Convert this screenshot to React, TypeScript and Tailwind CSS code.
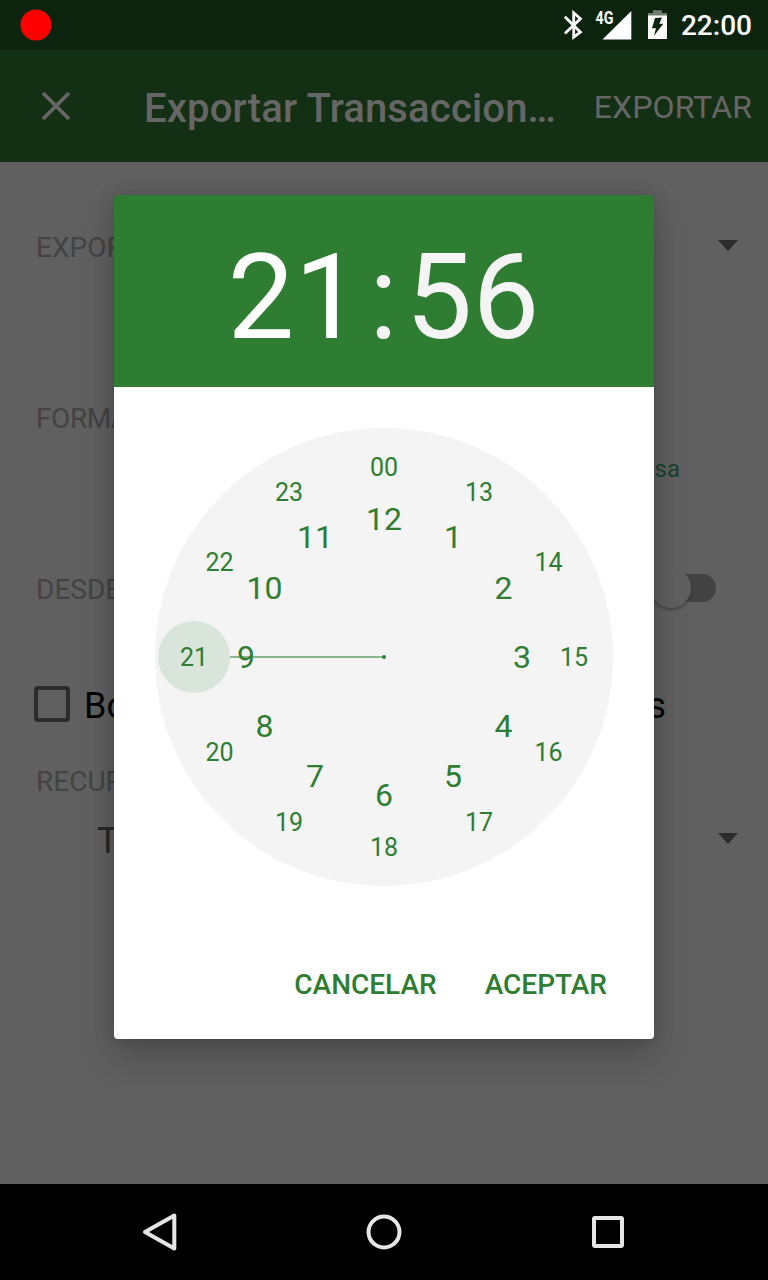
import React from "react";

const outerHours = ["00", "13", "14", "15", "16", "17", "18", "19", "20", "21", "22", "23"];
const innerHours = ["12", "1", "2", "3", "4", "5", "6", "7", "8", "9", "10", "11"];

function place(index: number, radius: number) {
  const angle = (index * Math.PI) / 6;
  return { x: 230 + radius * Math.sin(angle), y: 230 - radius * Math.cos(angle) };
}

function StatusBar() {
  return (
    <div className="flex h-[50px] items-center justify-between bg-[#0c240e] pr-4 pl-5">
      <svg className="size-8" viewBox="0 0 32 32">
        <circle cx="16" cy="16" r="15.5" fill="#f00" />
      </svg>
      <div className="flex items-center text-white">
        <svg className="h-[50px] w-[114px]" viewBox="554 0 114 50">
          <path d="M564.9 16.7 L580.4 32.2 L573.7 37.2 V12.8 L580.4 18.8 L564.9 33.4" fill="none" stroke="#fff" strokeWidth="2.8" />
          <path d="M631.3 11 V39.5 H602.5 Z" fill="#fff" />
          <text x="595.5" y="23.6" fill="#fff" fontSize="17.5" fontWeight="700" textLength="17.8" lengthAdjust="spacingAndGlyphs">4G</text>
          <path d="M653 10.2 H662 V13 H667 V16 H648 V13 H653 Z" fill="#6d7c6e" />
          <path d="M648 15.5 H667 V39 H648 Z" fill="#fff" />
          <path d="M655 18 L662 17.5 L659.3 23.8 H663.3 L653.8 36 L656 28.2 H652 Z" fill="#0c240e" />
        </svg>
        <span className="w-[84px] pt-[2px] text-right text-[28px] leading-[48px] font-medium">22:00</span>
      </div>
    </div>
  );
}

function AppBar() {
  return (
    <div className="flex h-28 items-center bg-[#143014] pr-4 pl-10 text-[#666]">
      <svg className="size-8" viewBox="0 0 32 32" fill="none" stroke="#666" strokeWidth="3.8">
        <path d="M3 3 L29 29 M29 3 L3 29" />
      </svg>
      <h1 className="ml-[72px] w-[412px] pt-[6px] text-[40px] leading-[48px] font-medium tracking-[0.16px] whitespace-nowrap">Exportar Transaccion…</h1>
      <span className="ml-auto pt-[2px] text-[32px] leading-[38px] tracking-[0.1px]">EXPORTAR</span>
    </div>
  );
}

function Caret() {
  return (
    <svg className="h-[11px] w-5" viewBox="0 0 20 11">
      <path d="M0 0 H20 L10 11 Z" fill="#2c2c2c" />
    </svg>
  );
}

function ExportForm() {
  return (
    <div className="flex h-[1022px] flex-col bg-[#606060] pt-[69px] pl-9 text-[28px] leading-[34px] text-[#434343]">
      <div className="flex h-[171px] items-start justify-between pr-[30px]">
        <span>EXPORTAR A:</span>
        <span className="flex h-7 items-center"><Caret /></span>
      </div>
      <div className="h-[171px]">
        <div className="h-[34px] tracking-[-0.4px]">FORMATO:</div>
        <div className="flex h-[66px] items-center justify-end pr-22 text-2xl text-[#18432d]">divisa</div>
      </div>
      <div className="flex h-[103px] items-start justify-between pr-13">
        <span>DESDE:</span>
        <span className="relative mt-px h-7 w-14 rounded-full bg-[#434343]">
          <span className="absolute -top-[6px] -left-[9px] size-10 rounded-full bg-[#606060] shadow-[0_2px_3px_rgba(0,0,0,0.3)]" />
        </span>
      </div>
      <div className="flex h-[89px] items-start justify-between pr-[102px] text-4xl leading-[42px] text-black">
        <span className="flex">
          <span className="mt-[10px] mr-[14px] -ml-[2px] size-9 rounded-[4px] border-4 border-[#2c2c2c]" />
          <span className="mt-[9px]">Borrar</span>
        </span>
        <span className="mt-[9px]">datos</span>
      </div>
      <div>RECURRENCIA</div>
      <div className="mt-[21px] flex h-[42px] items-center justify-between pr-[30px] pl-[61px] text-4xl text-[#262626]">
        <span>Tocar</span>
        <span className="-mt-[6px] flex"><Caret /></span>
      </div>
    </div>
  );
}

function ClockFace() {
  return (
    <svg className="size-[460px]" viewBox="0 0 460 460" fill="#2f7d32" textAnchor="middle">
      <circle cx="230" cy="230" r="229" fill="#f4f4f4" />
      <circle cx="40" cy="230" r="36" fill="#d9e5da" />
      <path d="M76 230 H230" stroke="#8bb78d" strokeWidth="2" />
      <circle cx="230" cy="230" r="2" />
      {outerHours.map((hour, i) => {
        const p = place(i, 190);
        return <text key={hour} x={p.x} y={p.y + 9} fontSize="25">{hour}</text>;
      })}
      {innerHours.map((hour, i) => {
        const p = place(i, 138);
        return <text key={hour} x={p.x} y={p.y + 10.9} fontSize="32">{hour}</text>;
      })}
    </svg>
  );
}

function TimePicker() {
  return (
    <div className="absolute top-[195px] left-[114px] flex h-[844px] w-[540px] flex-col rounded-[4px] text-[#2f7d32] shadow-[0_20px_36px_rgba(0,0,0,0.17),0_2px_20px_rgba(0,0,0,0.18)]">
      <div className="flex h-48 items-center justify-center rounded-t-[4px] bg-[#2f7d32] pt-[14px] text-[119px] leading-[140px] text-[#f4f4f4]">
        <span className="w-[134px] text-white">21</span>
        <span className="w-11 text-center">:</span>
        <span className="w-[135px]">56</span>
      </div>
      <div className="flex flex-1 flex-col rounded-b-[4px] bg-white">
        <div className="flex justify-center pt-10">
          <ClockFace />
        </div>
        <div className="mt-auto flex h-[109px] items-start justify-end gap-12 pt-[38px] pr-[47px] text-[28px] leading-[34px] font-medium">
          <button>CANCELAR</button>
          <button>ACEPTAR</button>
        </div>
      </div>
    </div>
  );
}

function NavigationBar() {
  return (
    <div className="flex h-24 items-center justify-center gap-44 bg-black">
      <svg className="size-12" viewBox="0 0 48 48" fill="none" stroke="#e6e6e6" strokeWidth="4" strokeLinejoin="round">
        <path d="M38.3 7.5 V40.5 L9 24 Z" />
      </svg>
      <svg className="size-12" viewBox="0 0 48 48" fill="none" stroke="#e6e6e6" strokeWidth="4">
        <circle cx="24" cy="24" r="15.5" />
      </svg>
      <svg className="size-12" viewBox="0 0 48 48" fill="none" stroke="#e6e6e6" strokeWidth="4">
        <rect x="10" y="10" width="28" height="28" rx="1" />
      </svg>
    </div>
  );
}

export default function App() {
  return (
    <div className="relative h-[1280px] w-[768px] overflow-hidden font-['Roboto',sans-serif]">
      <StatusBar />
      <AppBar />
      <ExportForm />
      <NavigationBar />
      <TimePicker />
    </div>
  );
}
